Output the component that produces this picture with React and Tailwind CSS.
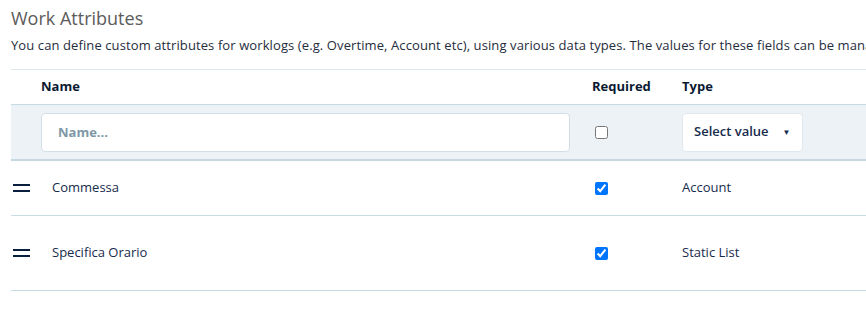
import React from "react";

const rows = [
  { name: "Commessa", required: true, type: "Account", height: "h-[55px]" },
  { name: "Specifica Orario", required: true, type: "Static List", height: "h-[75px]" },
];

const DragHandle = () => (
  <svg width="17" height="8" viewBox="0 0 17 8" className="ml-[2px]">
    <rect x="0" y="0" width="17" height="2" fill="#0a1f3d" />
    <rect x="0" y="6" width="17" height="2" fill="#0a1f3d" />
  </svg>
);

const App = () => {
  return (
    <div
      className="w-[866px] h-[326px] overflow-hidden bg-white pl-[11px] pt-[6px]"
      style={{ fontFamily: '"Open Sans", "Noto Sans", sans-serif' }}
    >
      <h1 className="text-[18px] leading-[24px] text-[#5b5b5b] font-normal whitespace-nowrap">
        Work Attributes
      </h1>
      <p className="mt-[5px] text-[13px] leading-[20px] tracking-[0.1px] text-[#1f2d3d] whitespace-nowrap">
        You can define custom attributes for worklogs (e.g. Overtime, Account etc), using various data types. The values for these fields can be managed per worklog.
      </p>

      <div className="mt-[14px] w-[1000px] border-t border-[#dce7ed]">
        {/* header */}
        <div className="grid grid-cols-[30px_551px_90px_1fr] h-[35px] items-center border-b border-[#c6dbe3] text-[13px] font-bold text-[#0b1a33]">
          <div />
          <div>Name</div>
          <div>Required</div>
          <div>Type</div>
        </div>

        {/* new attribute row */}
        <div className="grid grid-cols-[30px_551px_90px_1fr] h-[56px] items-center bg-[#edf2f6] border-b-2 border-[#c5d8e0]">
          <div />
          <div>
            <input
              type="text"
              placeholder="Name..."
              className="w-[529px] h-[39px] bg-white border border-[#d3dfe6] rounded-[4px] pl-[16px] text-[13px] font-bold placeholder:text-[#7e98a8] outline-none"
            />
          </div>
          <div>
            <input type="checkbox" readOnly className="w-[13px] h-[13px] ml-[3px] block" />
          </div>
          <div>
            <button className="w-[121px] h-[39px] bg-white border border-[#e1e8ed] rounded-[4px] flex items-center pl-[11px] text-[13px] font-semibold text-[#172b4d]">
              <span>Select value</span>
              <span className="ml-[14px] text-[8px] leading-none">▼</span>
            </button>
          </div>
        </div>

        {rows.map((row) => (
          <div
            key={row.name}
            className={`grid grid-cols-[30px_551px_90px_1fr] ${row.height} items-center border-b border-[#c8dde4] text-[13px] text-[#172b4d]`}
          >
            <div>
              <DragHandle />
            </div>
            <div className="pl-[11px]">{row.name}</div>
            <div>
              <input type="checkbox" checked={row.required} readOnly className="w-[13px] h-[13px] ml-[3px] block" />
            </div>
            <div>{row.type}</div>
          </div>
        ))}
      </div>
    </div>
  );
};

export default App;
